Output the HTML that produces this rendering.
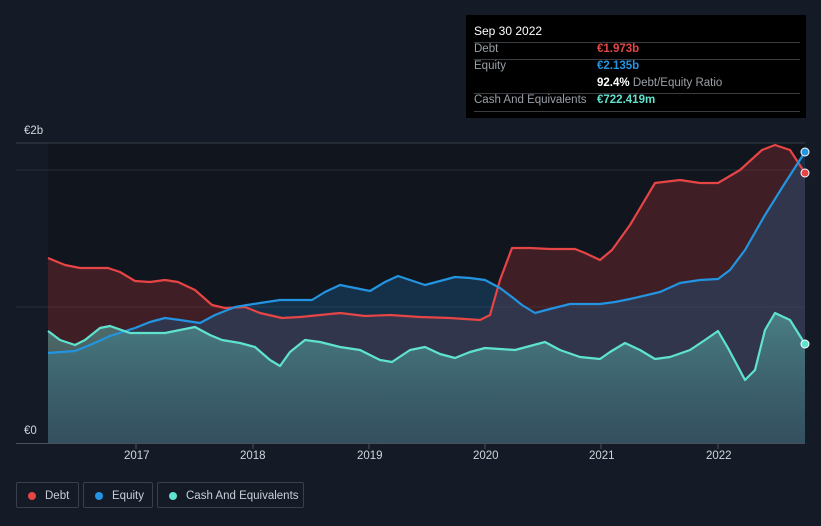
<!DOCTYPE html>
<html><head><meta charset="utf-8"><style>
body{margin:0;width:821px;height:526px;background:#151b26;font-family:"Liberation Sans",sans-serif;overflow:hidden;position:relative}
.tip{position:absolute;left:466px;top:15px;width:340px;height:103px;background:#000;}
.tip .r{position:absolute;left:8px;right:6px;font-size:11.5px;color:#9aa0a8;white-space:nowrap}
.tip .line{position:absolute;left:8px;right:6px;height:1px;background:#3a3d42}
.v{position:absolute;left:123px;font-weight:bold}
.leg{position:absolute;top:482px;height:26px;border:1px solid #3a404b;border-radius:2px;color:#c9ced6;font-size:11.5px;line-height:26px;box-sizing:border-box;white-space:nowrap}
.leg i{position:absolute;top:9px;left:11px;width:8px;height:8px;border-radius:50%}
.leg span{position:absolute;left:28px}
.ax{position:absolute;color:#d0d4da;font-size:11.5px}
</style></head><body>
<svg width="821" height="526" style="position:absolute;left:0;top:0">
<defs>
<linearGradient id="cg" x1="0" y1="0" x2="0" y2="1"><stop offset="0" stop-color="#5fb8b0" stop-opacity=".55"/><stop offset="1" stop-color="#3d8c88" stop-opacity=".3"/></linearGradient>
</defs>
<rect x="48" y="143" width="757" height="300" fill="#10151e"/>
<line x1="16" y1="143" x2="805" y2="143" stroke="#3c4048"/>
<line x1="16" y1="170" x2="805" y2="170" stroke="#2a2e36"/>
<line x1="16" y1="307" x2="805" y2="307" stroke="#2a2e36"/>
<polygon fill="#7a2a30" fill-opacity=".45" points="48,443 48,258 65,265 80,268 108,268 120,272 135,281 150,282 165,280 178,282 195,290 212,305 225,308 245,307 260,313 282,318 300,317 320,315 340,313 365,316 390,315 420,317 450,318 480,320 490,315 500,280 512,248 530,248 550,249 575,249 585,253 600,260 612,250 630,225 655,183 680,180 700,183 718,183 740,170 762,150 775,145 790,150 805,173 805,443"/>
<polygon fill="#1f5a8a" fill-opacity=".4" points="48,443 48,353 75,351 90,345 110,336 135,328 150,322 165,318 180,320 200,323 215,315 235,307 260,303 280,300 312,300 325,292 340,285 355,288 370,291 385,282 398,276 410,280 425,285 440,281 455,277 470,278 485,280 500,288 512,297 522,305 535,313 550,309 570,304 600,304 615,302 630,299 660,292 680,283 700,280 718,279 730,270 745,250 765,215 785,183 805,152 805,443"/>
<polygon fill="url(#cg)" points="48,443 48,331 60,340 75,345 85,340 100,328 110,326 130,333 165,333 180,330 195,327 210,335 222,340 240,343 255,347 270,360 280,366 290,352 305,340 320,342 340,347 360,350 380,360 392,362 410,350 425,347 440,354 455,358 470,352 485,348 500,349 515,350 530,346 545,342 560,350 580,357 600,359 610,352 625,343 640,350 655,359 670,357 690,350 705,340 718,331 728,348 745,380 755,370 765,330 775,313 790,320 805,344 805,443"/>
<g fill="none" stroke-width="2.2" stroke-linejoin="round">
<polyline stroke="#e64545" points="48,258 65,265 80,268 108,268 120,272 135,281 150,282 165,280 178,282 195,290 212,305 225,308 245,307 260,313 282,318 300,317 320,315 340,313 365,316 390,315 420,317 450,318 480,320 490,315 500,280 512,248 530,248 550,249 575,249 585,253 600,260 612,250 630,225 655,183 680,180 700,183 718,183 740,170 762,150 775,145 790,150 805,173"/>
<polyline stroke="#2394e0" points="48,353 75,351 90,345 110,336 135,328 150,322 165,318 180,320 200,323 215,315 235,307 260,303 280,300 312,300 325,292 340,285 355,288 370,291 385,282 398,276 410,280 425,285 440,281 455,277 470,278 485,280 500,288 512,297 522,305 535,313 550,309 570,304 600,304 615,302 630,299 660,292 680,283 700,280 718,279 730,270 745,250 765,215 785,183 805,152"/>
<polyline stroke="#5fe3cf" points="48,331 60,340 75,345 85,340 100,328 110,326 130,333 165,333 180,330 195,327 210,335 222,340 240,343 255,347 270,360 280,366 290,352 305,340 320,342 340,347 360,350 380,360 392,362 410,350 425,347 440,354 455,358 470,352 485,348 500,349 515,350 530,346 545,342 560,350 580,357 600,359 610,352 625,343 640,350 655,359 670,357 690,350 705,340 718,331 728,348 745,380 755,370 765,330 775,313 790,320 805,344"/>
</g>
<circle cx="805" cy="173" r="4" fill="#e64545" stroke="#fff" stroke-width="1"/>
<circle cx="805" cy="152" r="4" fill="#2394e0" stroke="#fff" stroke-width="1"/>
<circle cx="805" cy="344" r="4" fill="#5fe3cf" stroke="#fff" stroke-width="1"/>
<line x1="16" y1="443.5" x2="805" y2="443.5" stroke="#4a4f58"/>
<g stroke="#4a4f58"><line x1="136" y1="443" x2="136" y2="449"/><line x1="253" y1="443" x2="253" y2="449"/><line x1="369" y1="443" x2="369" y2="449"/><line x1="485" y1="443" x2="485" y2="449"/><line x1="601" y1="443" x2="601" y2="449"/><line x1="718" y1="443" x2="718" y2="449"/></g>
</svg>
<div class="ax" style="left:24px;top:125px">€2b</div>
<div class="ax" style="left:24px;top:425px">€0</div>
<div class="ax" style="left:124px;top:450px">2017</div>
<div class="ax" style="left:240px;top:450px">2018</div>
<div class="ax" style="left:357px;top:450px">2019</div>
<div class="ax" style="left:473px;top:450px">2020</div>
<div class="ax" style="left:589px;top:450px">2021</div>
<div class="ax" style="left:706px;top:450px">2022</div>
<div class="tip">
<div class="r" style="top:9px;color:#fff;font-size:12px">Sep 30 2022</div>
<div class="line" style="top:27px"></div>
<div class="r" style="top:28px">Debt<span class="v" style="color:#e64545">€1.973b</span></div>
<div class="line" style="top:44px"></div>
<div class="r" style="top:45px">Equity<span class="v" style="color:#2394e0">€2.135b</span></div>
<div class="r" style="top:62px"><span class="v" style="color:#fff;left:123px">92.4% <span style="font-weight:normal;color:#9aa0a8">Debt/Equity Ratio</span></span></div>
<div class="line" style="top:78px"></div>
<div class="r" style="top:79px">Cash And Equivalents<span class="v" style="color:#5fe3cf">€722.419m</span></div>
<div class="line" style="top:96px"></div>
</div>
<div class="leg" style="left:16px;width:63px"><i style="background:#e64545"></i><span>Debt</span></div>
<div class="leg" style="left:83px;width:70px"><i style="background:#2394e0"></i><span>Equity</span></div>
<div class="leg" style="left:157px;width:147px"><i style="background:#5fe3cf"></i><span>Cash And Equivalents</span></div>
</body></html>
